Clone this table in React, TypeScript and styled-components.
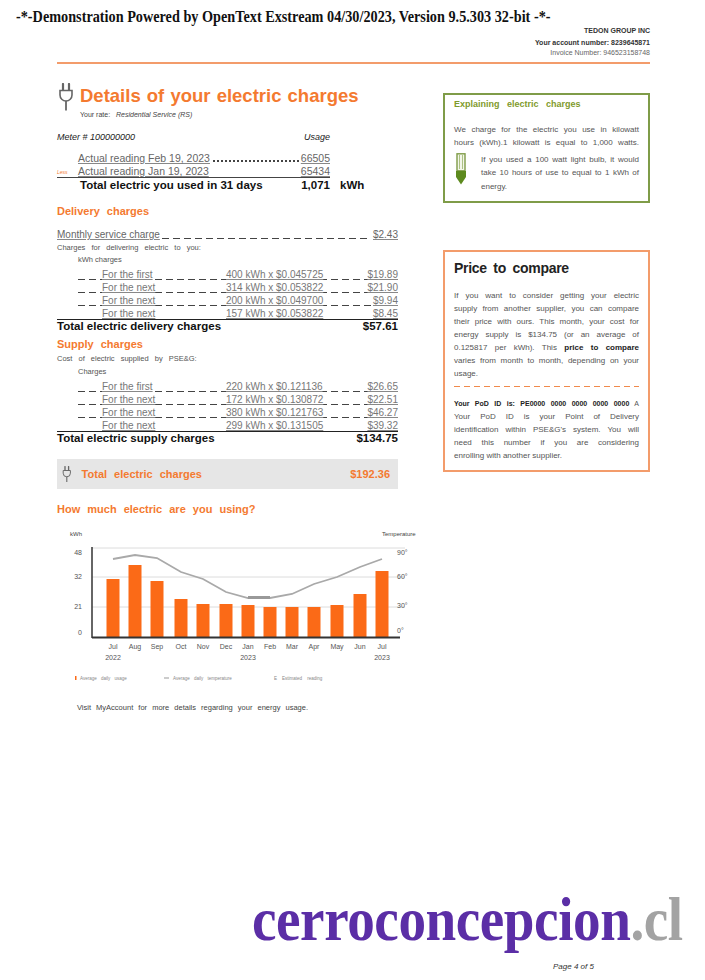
import styled, { createGlobalStyle } from "styled-components";

const ORANGE = "#f47a30";
const GREEN = "#7f9c48";

const GlobalStyle = createGlobalStyle`
  html, body {
    margin: 0;
    padding: 0;
    background: #fff;
  }
  body {
    font-family: "Liberation Sans", Arial, sans-serif;
    color: #333;
  }
`;

const Page = styled.div`
  width: 705px;
  height: 980px;
  overflow: hidden;
  background: #fff;
`;

const Banner = styled.div`
  margin-top: 8px;
  padding-left: 16px;
  height: 16px;
`;

const BannerText = styled.span`
  display: inline-block;
  font: bold 16px/16px "Liberation Serif", "Times New Roman", serif;
  color: #111;
  white-space: nowrap;
  transform: scaleX(0.89);
  transform-origin: left center;
`;

const Company = styled.div`
  margin-top: 2px;
  padding-right: 55px;
  text-align: right;
`;

const CompanyLine = styled.div<{ $bold?: boolean; $gap?: number }>`
  margin-top: ${(p) => p.$gap ?? 0}px;
  font-size: 7px;
  line-height: 10px;
  font-weight: ${(p) => (p.$bold ? "bold" : "normal")};
  color: ${(p) => (p.$bold ? "#333" : "#666")};
`;

const Rule = styled.div`
  margin: 4px 55px 0 57px;
  height: 2px;
  background: #f39c6b;
`;

const Main = styled.div`
  display: grid;
  grid-template-columns: 341px 207px;
  column-gap: 45px;
  padding-left: 57px;
  align-items: start;
`;

const LeftCol = styled.div`
  display: flex;
  flex-direction: column;
`;

const RightCol = styled.div`
  display: flex;
  flex-direction: column;
`;

/* ---------- title ---------- */

const TitleRow = styled.div`
  margin-top: 19px;
  display: flex;
  gap: 6px;
  padding-left: 1px;
`;

const TitleBlock = styled.div`
  display: flex;
  flex-direction: column;
`;

const Title = styled.div`
  margin-top: 1px;
  font: bold 18.5px/24px "Liberation Sans", Arial, sans-serif;
  color: ${ORANGE};
  word-spacing: 1px;
`;

const RateLine = styled.div`
  margin-top: 2px;
  font-size: 7px;
  line-height: 10px;
  color: #444;
  i {
    margin-left: 4px;
  }
`;

/* ---------- meter ---------- */

const MeterHead = styled.div`
  margin-top: 12px;
  width: 273px;
  display: flex;
  justify-content: space-between;
  font-style: italic;
  font-size: 9px;
  line-height: 10px;
  color: #222;
`;

const ReadingRow = styled.div<{ $first?: boolean; $solid?: boolean }>`
  margin-top: ${(p) => (p.$first ? 10 : 2)}px;
  width: 273px;
  height: 12px;
  display: flex;
  align-items: flex-end;
  font-size: 10.5px;
  line-height: 12px;
  color: #666;
  border-bottom: ${(p) => (p.$solid ? "1.5px solid #444" : "none")};
  box-sizing: border-box;
`;

const LessTag = styled.span`
  width: 21px;
  flex: none;
  font-size: 5px;
  line-height: 10px;
  color: ${ORANGE};
  font-style: italic;
`;

const Under = styled.span`
  text-decoration: underline;
  text-decoration-color: #888;
  white-space: nowrap;
`;

const Leader = styled.span<{ $kind: "dotted" | "dashed" | "none" }>`
  flex: 1;
  align-self: flex-end;
  margin: 0 2px 2px;
  height: 2px;
  background-image: ${(p) =>
    p.$kind === "dotted"
      ? "radial-gradient(circle, #444 0.9px, transparent 1px)"
      : p.$kind === "dashed"
      ? "repeating-linear-gradient(90deg, #444 0 7px, transparent 7px 11px)"
      : "none"};
  background-size: ${(p) => (p.$kind === "dotted" ? "4px 2px" : "100% 1.5px")};
  background-repeat: ${(p) => (p.$kind === "dotted" ? "repeat-x" : "no-repeat")};
  background-position: bottom left;
`;

const UsageTotal = styled.div`
  width: 305px;
  padding-left: 23px;
  box-sizing: border-box;
  display: flex;
  font: bold 11.5px/14px "Liberation Sans", Arial, sans-serif;
  color: #111;
`;

const Grow = styled.span`
  flex: 1;
`;

const Unit = styled.span`
  width: 22px;
  margin-left: 10px;
`;

/* ---------- charges ---------- */

const SectionHead = styled.div<{ $gap: number }>`
  margin-top: ${(p) => p.$gap}px;
  font: bold 11px/14px "Liberation Sans", Arial, sans-serif;
  color: ${ORANGE};
  word-spacing: 4px;
`;

const LineItem = styled.div`
  margin-top: 11px;
  display: flex;
  align-items: flex-end;
  font-size: 10px;
  line-height: 12px;
  color: #666;
`;

const Note = styled.div<{ $indent?: boolean; $gap: number }>`
  margin-top: ${(p) => p.$gap}px;
  padding-left: ${(p) => (p.$indent ? 21 : 0)}px;
  font-size: 7.5px;
  line-height: 10px;
  color: #555;
  word-spacing: ${(p) => (p.$indent ? 0 : 4)}px;
`;

const ChargeList = styled.div`
  margin-top: 2px;
  display: flex;
  flex-direction: column;
`;

const ChargeRow = styled.div<{ $h: number }>`
  margin-left: 21px;
  padding-left: 24px;
  height: ${(p) => p.$h}px;
  box-sizing: border-box;
  display: grid;
  grid-template-columns: 124px 1fr auto;
  align-items: end;
  font-size: 10px;
  line-height: 11px;
  color: #777;
  background-image: repeating-linear-gradient(90deg, #444 0 7px, transparent 7px 11px);
  background-size: 100% 1.5px;
  background-repeat: no-repeat;
  background-position: bottom left;
  &:last-child {
    background-image: none;
  }
`;

const TotalRow = styled.div`
  border-top: 1.5px solid #222;
  display: flex;
  justify-content: space-between;
  font: bold 11.5px/13px "Liberation Sans", Arial, sans-serif;
  color: #111;
`;

const TotalBar = styled.div`
  margin-top: 14px;
  height: 30px;
  background: #e6e6e6;
  display: flex;
  align-items: center;
  gap: 10px;
  padding: 0 8px 0 5px;
  font: bold 11px/14px "Liberation Sans", Arial, sans-serif;
  color: ${ORANGE};
  word-spacing: 4px;
`;

const ChartWrap = styled.div`
  margin-top: 11px;
  margin-left: 3px;
  height: 160px;
`;

const Visit = styled.div`
  margin-top: 16px;
  padding-left: 20px;
  font-size: 7.5px;
  line-height: 10px;
  color: #444;
  word-spacing: 3px;
`;

/* ---------- right boxes ---------- */

const InfoBox = styled.div<{ $color: string; $gap: number; $h: number }>`
  margin-top: ${(p) => p.$gap}px;
  height: ${(p) => p.$h}px;
  border: 2px solid ${(p) => p.$color};
  box-sizing: border-box;
  padding: 0 9px;
  display: flex;
  flex-direction: column;
`;

const BoxTitle = styled.div`
  margin-top: 4px;
  font: bold 9px/10px "Liberation Sans", Arial, sans-serif;
  color: #7f9a2c;
  word-spacing: 5px;
`;

const PriceTitle = styled.div`
  margin-top: 6px;
  font: bold 14px/20px "Liberation Sans", Arial, sans-serif;
  color: #222;
  letter-spacing: -0.3px;
  word-spacing: 3px;
`;

const Para = styled.div<{ $gap: number; $lh: number }>`
  margin-top: ${(p) => p.$gap}px;
  font-size: 8px;
  line-height: ${(p) => p.$lh}px;
  color: #555;
`;

const Line = styled.div<{ $last?: boolean; $small?: boolean }>`
  white-space: nowrap;
  font-size: ${(p) => (p.$small ? "7px" : "inherit")};
  text-align: justify;
  text-align-last: ${(p) => (p.$last ? "left" : "justify")};
  b {
    color: #222;
  }
`;

const BulbRow = styled.div`
  margin-top: 4px;
  display: flex;
  gap: 15px;
  padding-left: 2px;
`;

const BulbText = styled.div`
  flex: 1;
  font-size: 8px;
  line-height: 13.5px;
  color: #555;
`;

const DashRule = styled.div`
  margin-top: 6px;
  height: 1.5px;
  background-image: repeating-linear-gradient(90deg, #f08a4c 0 6px, transparent 6px 10px);
`;

/* ---------- footer ---------- */

const Watermark = styled.div`
  margin-top: 175px;
  padding-left: 252px;
  height: 62px;
`;

const WatermarkText = styled.span`
  display: inline-block;
  font: bold 62px/62px "Liberation Serif", "Times New Roman", serif;
  color: #5b2ea6;
  white-space: nowrap;
  transform: scaleX(0.89);
  transform-origin: left center;
  letter-spacing: -0.5px;
`;

const Tld = styled.span`
  color: #a3a3a3;
`;

const PageNo = styled.div`
  margin-top: 12px;
  padding-left: 553px;
  font-style: italic;
  font-size: 8px;
  line-height: 10px;
  color: #333;
`;

/* ---------- drawings ---------- */

function PlugIcon({ size = 1 }: { size?: number }) {
  return (
    <svg width={16 * size} height={28 * size} viewBox="0 0 16 28">
      <path d="M5 1v6M11 1v6" stroke="#666" strokeWidth="2.2" strokeLinecap="round" />
      <path d="M2 7.5h12v4.5a6 6 0 0 1-12 0z" fill="none" stroke="#666" strokeWidth="1.6" />
      <path d="M8 18v9.5" stroke="#666" strokeWidth="1.8" />
    </svg>
  );
}

function BulbIcon() {
  return (
    <svg width="10" height="32" viewBox="0 0 10 32">
      <rect x="1" y="0.8" width="8" height="17" fill="#f2f6e8" stroke={GREEN} strokeWidth="1.4" />
      <path d="M3.5 2v14M6.5 2v14" stroke="#9bb46a" strokeWidth="0.8" />
      <path d="M0 18h10v6l-5 7.5l-5-7.5z" fill="#5d8a1e" />
    </svg>
  );
}

const months = ["Jul", "Aug", "Sep", "Oct", "Nov", "Dec", "Jan", "Feb", "Mar", "Apr", "May", "Jun", "Jul"];
const years: Record<number, string> = { 0: "2022", 6: "2023", 12: "2023" };
const barX = [53, 75, 97, 121, 143, 166, 188, 210, 232, 254, 277, 300, 322];
const barTop = [52, 38, 54, 72, 77, 77, 78, 80, 80, 80, 78, 67, 44];
const tempY = [32, 28, 31, 45, 52, 65, 71, 71, 67, 57, 50, 40, 32];

function UsageChart() {
  const tempPath = tempY.map((y, i) => `${i === 0 ? "M" : "L"}${barX[i]} ${y}`).join(" ");
  return (
    <svg width="372" height="160" viewBox="0 0 372 160" fontFamily="Liberation Sans, Arial, sans-serif">
      <text x="10" y="9" fontSize="6" fill="#444">kWh</text>
      <text x="322" y="9" fontSize="6" fill="#444">Temperature</text>
      {[21, 50, 80].map((y) => (
        <line key={y} x1="32" x2="345" y1={y} y2={y} stroke="#dcdcdc" strokeWidth="1" />
      ))}
      {[
        ["48", 28],
        ["32", 52],
        ["21", 82],
        ["0", 108],
      ].map(([t, y]) => (
        <text key={t} x="22" y={y} fontSize="7" fill="#555" textAnchor="end">{t}</text>
      ))}
      {[
        ["90°", 28],
        ["60°", 52],
        ["30°", 81],
        ["0°", 106],
      ].map(([t, y]) => (
        <text key={t} x="337" y={y} fontSize="7" fill="#555">{t}</text>
      ))}
      {barX.map((x, i) => (
        <rect key={i} x={x - 6.5} y={barTop[i]} width="13" height={110 - barTop[i]} fill="#fb6a17" />
      ))}
      <path d={tempPath} fill="none" stroke="#a9a9a9" strokeWidth="1.8" />
      <path d="M188 70.5L210 70.5" stroke="#999" strokeWidth="3" />
      <line x1="32" x2="32" y1="20" y2="111" stroke="#333" strokeWidth="1.5" />
      <line x1="32" x2="340" y1="110.5" y2="110.5" stroke="#333" strokeWidth="2" />
      {barX.map((x, i) => (
        <text key={i} x={x} y="122" fontSize="7" fill="#555" textAnchor="middle">{months[i]}</text>
      ))}
      {Object.entries(years).map(([i, y]) => (
        <text key={i} x={barX[Number(i)]} y="133" fontSize="7" fill="#555" textAnchor="middle">{y}</text>
      ))}
      <rect x="15" y="149" width="1.5" height="4" fill="#fb6a17" />
      <text x="20" y="153" fontSize="4.5" fill="#888" wordSpacing="3">Average daily usage</text>
      <line x1="104" x2="109" y1="151" y2="151" stroke="#999" strokeWidth="1" />
      <text x="113" y="153" fontSize="4.5" fill="#888" wordSpacing="3">Average daily temperature</text>
      <text x="214" y="153" fontSize="4.5" fill="#888">E</text>
      <text x="222" y="153" fontSize="4.5" fill="#888" wordSpacing="4">Estimated reading</text>
    </svg>
  );
}

/* ---------- data ---------- */

const delivery = [
  ["For the first", "400 kWh x $0.045725", "$19.89"],
  ["For the next", "314 kWh x $0.053822", "$21.90"],
  ["For the next", "200 kWh x $0.049700", "$9.94"],
  ["For the next", "157 kWh x $0.053822", "$8.45"],
];

const supply = [
  ["For the first", "220 kWh x $0.121136", "$26.65"],
  ["For the next", "172 kWh x $0.130872", "$22.51"],
  ["For the next", "380 kWh x $0.121763", "$46.27"],
  ["For the next", "299 kWh x $0.131505", "$39.32"],
];

function App() {
  return (
    <>
      <GlobalStyle />
      <Page>
        <Banner>
          <BannerText>-*-Demonstration Powered by OpenText Exstream 04/30/2023, Version 9.5.303 32-bit -*-</BannerText>
        </Banner>
        <Company>
          <CompanyLine $bold>TEDON GROUP INC</CompanyLine>
          <CompanyLine $bold $gap={2}>Your account number: 8239645871</CompanyLine>
          <CompanyLine>Invoice Number: 946523158748</CompanyLine>
        </Company>
        <Rule />

        <Main>
          <LeftCol>
            <TitleRow>
              <PlugIcon />
              <TitleBlock>
                <Title>Details of your electric charges</Title>
                <RateLine>
                  Your rate: <i>Residential Service (RS)</i>
                </RateLine>
              </TitleBlock>
            </TitleRow>

            <MeterHead>
              <span>Meter # 100000000</span>
              <span>Usage</span>
            </MeterHead>
            <ReadingRow $first>
              <LessTag />
              <Under>Actual reading Feb 19, 2023</Under>
              <Leader $kind="dotted" />
              <Under>66505</Under>
            </ReadingRow>
            <ReadingRow $solid>
              <LessTag>Less</LessTag>
              <Under>Actual reading Jan 19, 2023</Under>
              <Leader $kind="none" />
              <Under>65434</Under>
            </ReadingRow>
            <UsageTotal>
              <Grow>Total electric you used in 31 days</Grow>
              <span>1,071</span>
              <Unit>kWh</Unit>
            </UsageTotal>

            <SectionHead $gap={12}>Delivery charges</SectionHead>
            <LineItem>
              <Under>Monthly service charge</Under>
              <Leader $kind="dashed" />
              <Under>$2.43</Under>
            </LineItem>
            <Note $gap={2}>Charges for delivering electric to you:</Note>
            <Note $gap={2} $indent>kWh charges</Note>
            <ChargeList>
              {delivery.map(([a, b, c], i) => (
                <ChargeRow key={i} $h={13}>
                  <Under>{a}</Under>
                  <Under>{b}</Under>
                  <Under>{c}</Under>
                </ChargeRow>
              ))}
            </ChargeList>
            <TotalRow>
              <span>Total electric delivery charges</span>
              <span>$57.61</span>
            </TotalRow>

            <SectionHead $gap={4}>Supply charges</SectionHead>
            <Note $gap={3}>Cost of electric supplied by PSE&amp;G:</Note>
            <Note $gap={3} $indent>Charges</Note>
            <ChargeList>
              {supply.map(([a, b, c], i) => (
                <ChargeRow key={i} $h={13}>
                  <Under>{a}</Under>
                  <Under>{b}</Under>
                  <Under>{c}</Under>
                </ChargeRow>
              ))}
            </ChargeList>
            <TotalRow>
              <span>Total electric supply charges</span>
              <span>$134.75</span>
            </TotalRow>

            <TotalBar>
              <PlugIcon size={0.6} />
              <Grow>Total electric charges</Grow>
              <span>$192.36</span>
            </TotalBar>

            <SectionHead $gap={13}>How much electric are you using?</SectionHead>
            <ChartWrap>
              <UsageChart />
            </ChartWrap>
            <Visit>Visit MyAccount for more details regarding your energy usage.</Visit>
          </LeftCol>

          <RightCol>
            <InfoBox $color={GREEN} $gap={29} $h={110}>
              <BoxTitle>Explaining electric charges</BoxTitle>
              <Para $gap={13.5} $lh={13}>
                <Line>We charge for the electric you use in kilowatt</Line>
                <Line>hours (kWh).1 kilowatt is equal to 1,000 watts.</Line>
              </Para>
              <BulbRow>
                <BulbIcon />
                <BulbText>
                  <Line>If you used a 100 watt light bulb, it would</Line>
                  <Line>take 10 hours of use to equal to 1 kWh of</Line>
                  <Line $last>energy.</Line>
                </BulbText>
              </BulbRow>
            </InfoBox>

            <InfoBox $color="#f39c6b" $gap={47} $h={222}>
              <PriceTitle>Price to compare</PriceTitle>
              <Para $gap={10.5} $lh={13}>
                <Line>If you want to consider getting your electric</Line>
                <Line>supply from another supplier, you can compare</Line>
                <Line>their price with ours. This month, your cost for</Line>
                <Line>energy supply is $134.75 (or an average of</Line>
                <Line>
                  0.125817 per kWh). This <b>price to compare</b>
                </Line>
                <Line>varies from month to month, depending on your</Line>
                <Line $last>usage.</Line>
              </Para>
              <DashRule />
              <Para $gap={9.5} $lh={13}>
                <Line $small>
                  <b>Your PoD ID is: PE0000 0000 0000 0000 0000</b> A
                </Line>
                <Line>Your PoD ID is your Point of Delivery</Line>
                <Line>identification within PSE&amp;G's system. You will</Line>
                <Line>need this number if you are considering</Line>
                <Line $last>enrolling with another supplier.</Line>
              </Para>
            </InfoBox>
          </RightCol>
        </Main>

        <Watermark>
          <WatermarkText>
            cerroconcepcion<Tld>.cl</Tld>
          </WatermarkText>
        </Watermark>
        <PageNo>Page 4 of 5</PageNo>
      </Page>
    </>
  );
}

export default App;
